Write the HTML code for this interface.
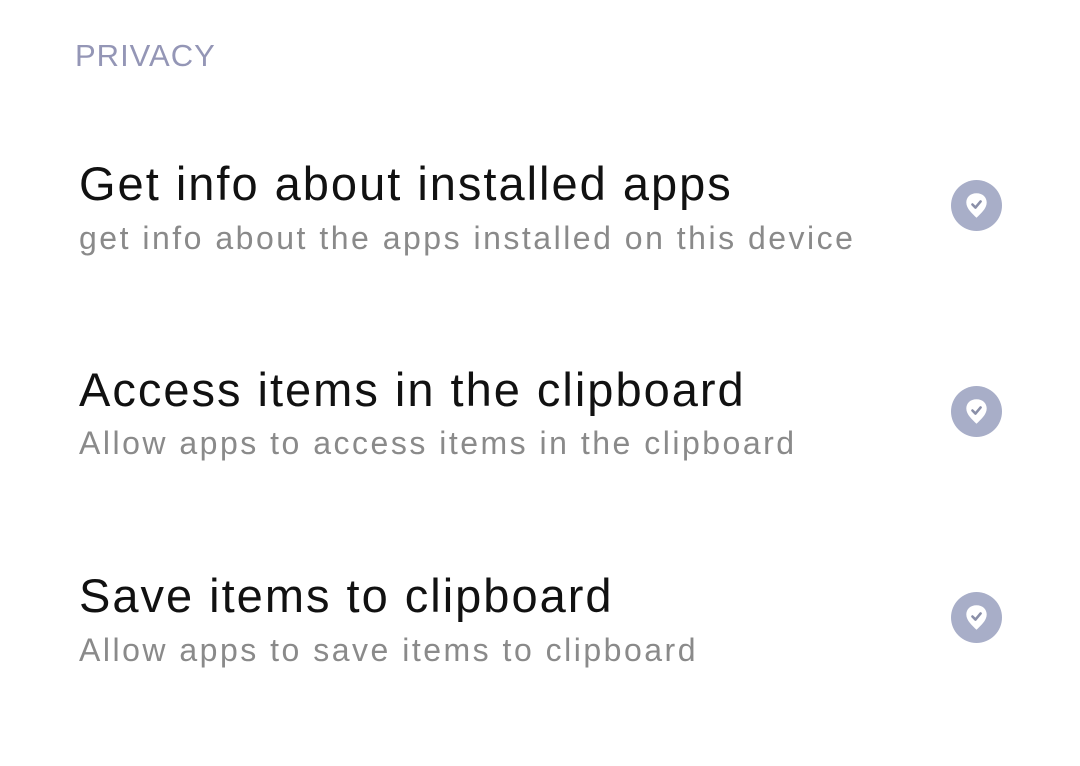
<!DOCTYPE html>
<html><head><style>
body{margin:0;width:1080px;height:766px;background:#fff;font-family:"Liberation Sans",sans-serif;position:relative;overflow:hidden}
.h{position:absolute;left:75px;top:38px;font-size:31px;color:#9496b6;letter-spacing:1px}
.t{position:absolute;left:79px;font-size:47px;color:#111;white-space:nowrap;letter-spacing:2px}
.s{position:absolute;left:79px;font-size:32px;color:#8a8a8a;white-space:nowrap;letter-spacing:2.5px}
.i{position:absolute;left:951px;width:51px;height:51px}
</style></head><body>
<div class="h">PRIVACY</div>
<div class="t" style="top:156px">Get info about installed apps</div>
<div class="s" style="top:220px">get info about the apps installed on this device</div>
<div class="t" style="top:362px">Access items in the clipboard</div>
<div class="s" style="top:425px">Allow apps to access items in the clipboard</div>
<div class="t" style="top:568px">Save items to clipboard</div>
<div class="s" style="top:632px">Allow apps to save items to clipboard</div>
<svg class="i" style="top:180px" viewBox="0 0 50 50"><circle cx="25" cy="25" r="25" fill="#a8aec8"/><path d="M25 13c-6 0-10 4-10 9 0 6 6 11 10 15 4-4 10-9 10-15 0-5-4-9-10-9z" fill="#fff"/><path d="M21 24l3 3 5-6" stroke="#8a8fa8" stroke-width="2.5" fill="none" stroke-linecap="round" stroke-linejoin="round"/></svg>
<svg class="i" style="top:386px" viewBox="0 0 50 50"><circle cx="25" cy="25" r="25" fill="#a8aec8"/><path d="M25 13c-6 0-10 4-10 9 0 6 6 11 10 15 4-4 10-9 10-15 0-5-4-9-10-9z" fill="#fff"/><path d="M21 24l3 3 5-6" stroke="#8a8fa8" stroke-width="2.5" fill="none" stroke-linecap="round" stroke-linejoin="round"/></svg>
<svg class="i" style="top:592px" viewBox="0 0 50 50"><circle cx="25" cy="25" r="25" fill="#a8aec8"/><path d="M25 13c-6 0-10 4-10 9 0 6 6 11 10 15 4-4 10-9 10-15 0-5-4-9-10-9z" fill="#fff"/><path d="M21 24l3 3 5-6" stroke="#8a8fa8" stroke-width="2.5" fill="none" stroke-linecap="round" stroke-linejoin="round"/></svg>
</body></html>
